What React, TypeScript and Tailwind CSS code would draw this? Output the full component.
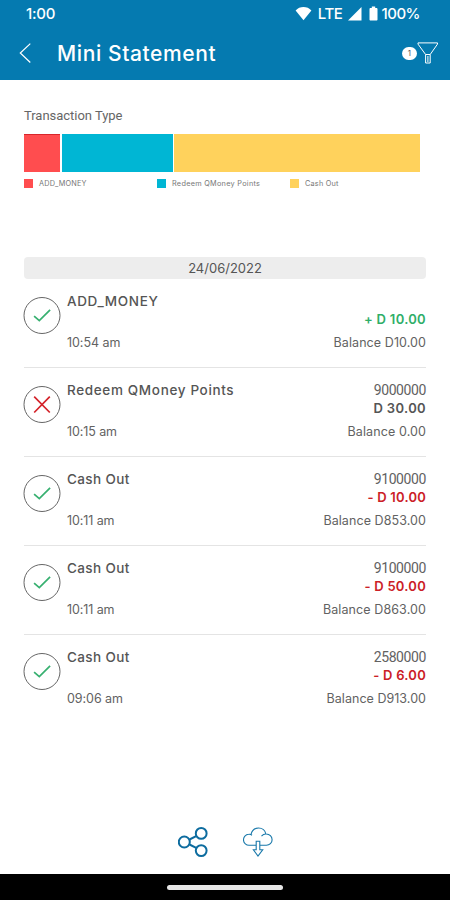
import clsx from "clsx";

type Transaction = {
  title: string;
  time: string;
  account?: string;
  amount: string;
  balance: string;
  failed?: boolean;
  amountClass: string;
  titleClass: string;
  timeClass: string;
  balanceClass: string;
};

const transactions: Transaction[] = [
  {
    title: "ADD_MONEY",
    time: "10:54 am",
    amount: "+ D 10.00",
    balance: "Balance D10.00",
    amountClass: "text-[#2fae68] tracking-[0.3px]",
    titleClass: "tracking-[0.65px]",
    timeClass: "tracking-[-0.05px]",
    balanceClass: "tracking-[0.08px]",
  },
  {
    title: "Redeem QMoney Points",
    time: "10:15 am",
    account: "9000000",
    amount: "D 30.00",
    balance: "Balance 0.00",
    failed: true,
    amountClass: "text-[#555] tracking-[0.35px]",
    titleClass: "tracking-[0.65px]",
    timeClass: "tracking-[-0.1px]",
    balanceClass: "tracking-[0.1px]",
  },
  {
    title: "Cash Out",
    time: "10:11 am",
    account: "9100000",
    amount: "- D 10.00",
    balance: "Balance D853.00",
    amountClass: "text-[#cb2026] tracking-[0.2px]",
    titleClass: "tracking-[0.4px]",
    timeClass: "tracking-[-0.1px]",
    balanceClass: "tracking-[0.08px]",
  },
  {
    title: "Cash Out",
    time: "10:11 am",
    account: "9100000",
    amount: "- D 50.00",
    balance: "Balance D863.00",
    amountClass: "text-[#cb2026] tracking-[0.25px]",
    titleClass: "tracking-[0.4px]",
    timeClass: "tracking-[-0.1px]",
    balanceClass: "tracking-[0.1px]",
  },
  {
    title: "Cash Out",
    time: "09:06 am",
    account: "2580000",
    amount: "- D 6.00",
    balance: "Balance D913.00",
    amountClass: "text-[#cb2026] tracking-[0.25px]",
    titleClass: "tracking-[0.4px]",
    timeClass: "tracking-[-0.05px]",
    balanceClass: "tracking-[0.03px]",
  },
];

const legend = [
  { label: "ADD_MONEY", color: "bg-[#ff4d4f]", text: "tracking-[0.2px]" },
  { label: "Redeem QMoney Points", color: "bg-[#00b6d4]", text: "tracking-[0.28px]" },
  { label: "Cash Out", color: "bg-[#ffd25c]", text: "tracking-[0.2px]" },
];

function StatusBar() {
  return (
    <div className="flex h-7 items-center pb-[2px] pl-[26px] pr-[30px] text-[15px] font-medium leading-none">
      <span className="tracking-[-0.2px]">1:00</span>
      <div className="ml-auto flex items-center">
        <svg className="mr-[6px] h-[15px] w-[17px]" viewBox="0 0 17 15" fill="currentColor">
          <path d="M8.5 14.3 0.6 4.4C2.7 2.2 5.5 1 8.5 1s5.8 1.2 7.900 3.400z" />
        </svg>
        <span className="tracking-[-0.4px]">LTE</span>
        <svg className="ml-[5px] h-[15px] w-[14px]" viewBox="0 0 14 15" fill="currentColor">
          <path d="M13.5 1v13.5H0z" />
        </svg>
        <svg className="ml-[7px] mr-[4px] h-[15px] w-[9px]" viewBox="0 0 9 15" fill="currentColor">
          <path d="M2.8 0.5h3.4v1.4h1.2c.7 0 1.1.4 1.1 1.1v10.4c0 .7-.4 1.1-1.1 1.1H1.6c-.7 0-1.1-.4-1.1-1.1V3c0-.7.4-1.1 1.1-1.1h1.2z" />
        </svg>
        <span className="tracking-[-0.5px]">100%</span>
      </div>
    </div>
  );
}

function Header() {
  return (
    <header className="h-20 bg-[#057ab0] text-white">
      <StatusBar />
      <div className="flex h-[52px] items-center pl-[19px] pr-[11px]">
        <svg className="-mt-[2px] h-[22px] w-[13px]" viewBox="0 0 13 22" fill="none" stroke="currentColor" strokeWidth="1.2">
          <path d="M11.3 1.6 1.3 11l10 9.5" />
        </svg>
        <h1 className="ml-[25px] text-[21px] font-medium tracking-[0.6px]">Mini Statement</h1>
        <span className="-mt-[2px] ml-auto flex h-[13px] w-[15px] items-center justify-center rounded-full bg-white text-[8px] text-[#555]">
          1
        </span>
        <svg className="-mt-[3px] h-[22px] w-[22px]" viewBox="0 0 22 22" fill="none" stroke="currentColor" strokeWidth="1">
          <path d="M1 .9h19.5v1.2L13.2 12.5V21H8.6v-8.5L1 2.1zM8.6 12.5h4.6M10.9 14v6" />
        </svg>
      </div>
    </header>
  );
}

function StatusIcon({ failed }: { failed?: boolean }) {
  return (
    <svg className="-ml-px mt-[18px] h-[37px] w-[38px] shrink-0" viewBox="0 0 38 37" fill="none">
      <circle cx="19" cy="18.5" r="18" stroke="#555" strokeWidth="0.9" />
      {failed ? (
        <path d="m11.2 10.7 15.6 15.8M26.8 10.7 11.2 26.5" stroke="#d4232a" strokeWidth="1.7" />
      ) : (
        <path d="m11.1 19.1 5.2 4.6 10.8-10.8" stroke="#37b070" strokeWidth="1.7" />
      )}
    </svg>
  );
}

function TransactionRow({ item, last }: { item: Transaction; last: boolean }) {
  return (
    <li
      className={clsx(
        "flex h-[89.1px] border-b text-[13px] leading-[18px] text-[#626262]",
        last ? "border-transparent" : "border-[#e4e4e4]"
      )}
    >
      <StatusIcon failed={item.failed} />
      <div className="ml-[6px] flex flex-col pt-[13px]">
        <span className={clsx("text-[13.5px] font-medium text-[#555]", item.titleClass)}>{item.title}</span>
        <span className={clsx("mt-[24px] text-[12.5px]", item.timeClass)}>{item.time}</span>
      </div>
      <div className="ml-auto flex flex-col items-end pt-[13px]">
        <span className="h-[18px] font-['Roboto'] text-[14px] tracking-[-0.4px]">{item.account}</span>
        <span className={clsx("font-semibold", item.amountClass)}>{item.amount}</span>
        <span className={clsx("mt-[6px] text-[12.5px]", item.balanceClass)}>{item.balance}</span>
      </div>
    </li>
  );
}

export default function App() {
  return (
    <div className="flex h-[900px] w-[450px] flex-col overflow-hidden bg-white font-['Inter',sans-serif]">
      <Header />
      <main className="flex-1 px-6 pt-[26px]">
        <h2 className="font-['Roboto'] text-[13px] leading-[20px] tracking-[-0.03px] text-[#666]">Transaction Type</h2>
        <div className="mt-2 flex h-[38px] w-[396px] gap-[1.5px]">
          <div className="w-[36px] border-t border-[#d8262b] bg-[#ff4d4f]" />
          <div className="w-[111px] bg-[#00b6d4]" />
          <div className="flex-1 bg-[#ffd25c]" />
        </div>
        <div className="mt-[6px] flex h-[10px]">
          {legend.map((entry) => (
            <div key={entry.label} className="flex w-[133px] items-center gap-[6px]">
              <span className={clsx("h-[9px] w-[9px]", entry.color)} />
              <span className={clsx("whitespace-nowrap pt-px text-[7.3px] leading-[10px] text-[#777]", entry.text)}>
                {entry.label}
              </span>
            </div>
          ))}
        </div>
        <div className="mt-[69px] flex h-[22px] w-[402px] items-center justify-center rounded-[4px] bg-[#ededed] pt-[2px] text-[13px] text-[#555]">
          24/06/2022
        </div>
        <ul>
          {transactions.map((item, i) => (
            <TransactionRow key={i} item={item} last={i === transactions.length - 1} />
          ))}
        </ul>
      </main>
      <footer className="flex h-[49px] items-start justify-center gap-[34px] pl-[1px] pt-[2px]">
        <svg className="h-[30px] w-[31px]" viewBox="0 0 31 30" fill="none" stroke="#0d6c9f" strokeWidth="2">
          <circle cx="6.3" cy="15" r="5.5" />
          <circle cx="23.2" cy="6.4" r="5.4" />
          <circle cx="23.2" cy="23.6" r="5.4" />
          <path d="m11.5 12.5 7.2-3.7M11.5 17.5l7.2 3.7" />
        </svg>
        <svg className="h-[30px] w-[30px]" viewBox="0 0 30 30" fill="none" stroke="#1878aa" strokeWidth="1.1">
          <path d="M13 18.3H6.3a5.5 5.5 0 0 1-.6-11c1.2-.1 2.4.2 3.3.9M8 7.4C9 3.500 12.1 1 15.6 1c3.7 0 6.7 2.5 7.3 6.1M18.500 9.2c1.3-1.6 2.9-2.3 4.7-2.2 3.4.1 5.9 2.6 5.9 5.7s-2.5 5.6-5.7 5.6H17" />
          <path d="M13.2 14.3h3.6v8.500h2.9L15 29l-4.6-6.2h2.8z" />
        </svg>
      </footer>
      <div className="flex h-[26px] items-center justify-center bg-black">
        <div className="h-[5px] w-[116px] rounded-full bg-[#e6e6e6]" />
      </div>
    </div>
  );
}
